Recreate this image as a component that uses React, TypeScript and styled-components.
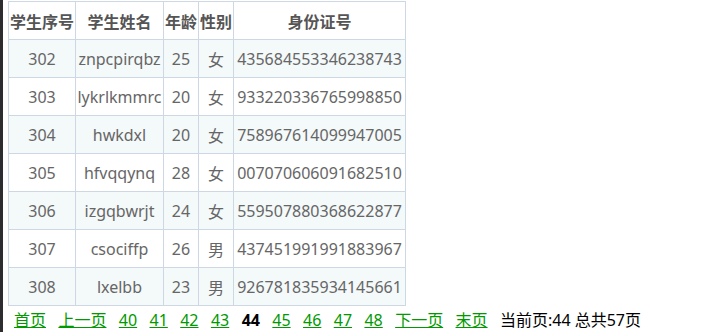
import React from 'react';
import styled, { createGlobalStyle } from 'styled-components';

const GlobalStyle = createGlobalStyle`
  html {
    border-left: 3px solid #2d2d30;
    background: #fff;
  }
  body {
    margin: 1px 0 0 5px;
    font-family: "Noto Sans", "Open Sans", "Noto Sans CJK SC", sans-serif;
    font-size: 16px;
  }
`;

const Table = styled.table`
  border-collapse: collapse;
  table-layout: fixed;
  width: 397px;
`;

const HeadCell = styled.th`
  height: 37px;
  padding: 0;
  border: 1px solid #cdd8e4;
  color: #555;
  font-weight: bold;
  text-align: center;
  white-space: nowrap;
  background: #fff;
`;

const Row = styled.tr<{ $striped: boolean }>`
  background: ${p => (p.$striped ? '#f4f9fa' : '#fff')};
`;

const Cell = styled.td`
  height: 37px;
  padding: 0;
  border: 1px solid #cdd8e4;
  color: #666;
  text-align: center;
  white-space: nowrap;
  overflow: hidden;
`;

const Pager = styled.div`
  display: flex;
  align-items: center;
  gap: 12.4px;
  padding: 2px 0 0 6px;
  line-height: 24px;
`;

const PageLink = styled.a`
  color: #009900;
  text-decoration: underline;
  cursor: pointer;
`;

const Current = styled.b`
  color: #000;
`;

const Info = styled.span`
  color: #000;
`;

const cols = [67, 88, 35, 35, 172];
const headers = ['学生序号', '学生姓名', '年龄', '性别', '身份证号'];

const students = [
  ['302', 'znpcpirqbz', '25', '女', '435684553346238743'],
  ['303', 'lykrlkmmrc', '20', '女', '933220336765998850'],
  ['304', 'hwkdxl', '20', '女', '758967614099947005'],
  ['305', 'hfvqqynq', '28', '女', '007070606091682510'],
  ['306', 'izgqbwrjt', '24', '女', '559507880368622877'],
  ['307', 'csociffp', '26', '男', '437451991991883967'],
  ['308', 'lxelbb', '23', '男', '926781835934145661'],
];

const pages = [40, 41, 42, 43, 44, 45, 46, 47, 48];
const current = 44;

export default function App() {
  return (
    <>
      <GlobalStyle />
      <Table>
        <colgroup>
          {cols.map((w, i) => (
            <col key={i} style={{ width: w }} />
          ))}
        </colgroup>
        <thead>
          <tr>
            {headers.map(h => (
              <HeadCell key={h}>{h}</HeadCell>
            ))}
          </tr>
        </thead>
        <tbody>
          {students.map((s, i) => (
            <Row key={s[0]} $striped={i % 2 === 0}>
              {s.map((v, j) => (
                <Cell key={j}>{v}</Cell>
              ))}
            </Row>
          ))}
        </tbody>
      </Table>
      <Pager>
        <PageLink>首页</PageLink>
        <PageLink>上一页</PageLink>
        {pages.map(p =>
          p === current ? <Current key={p}>{p}</Current> : <PageLink key={p}>{p}</PageLink>
        )}
        <PageLink>下一页</PageLink>
        <PageLink>末页</PageLink>
        <Info>当前页:{current} 总共57页</Info>
      </Pager>
    </>
  );
}
